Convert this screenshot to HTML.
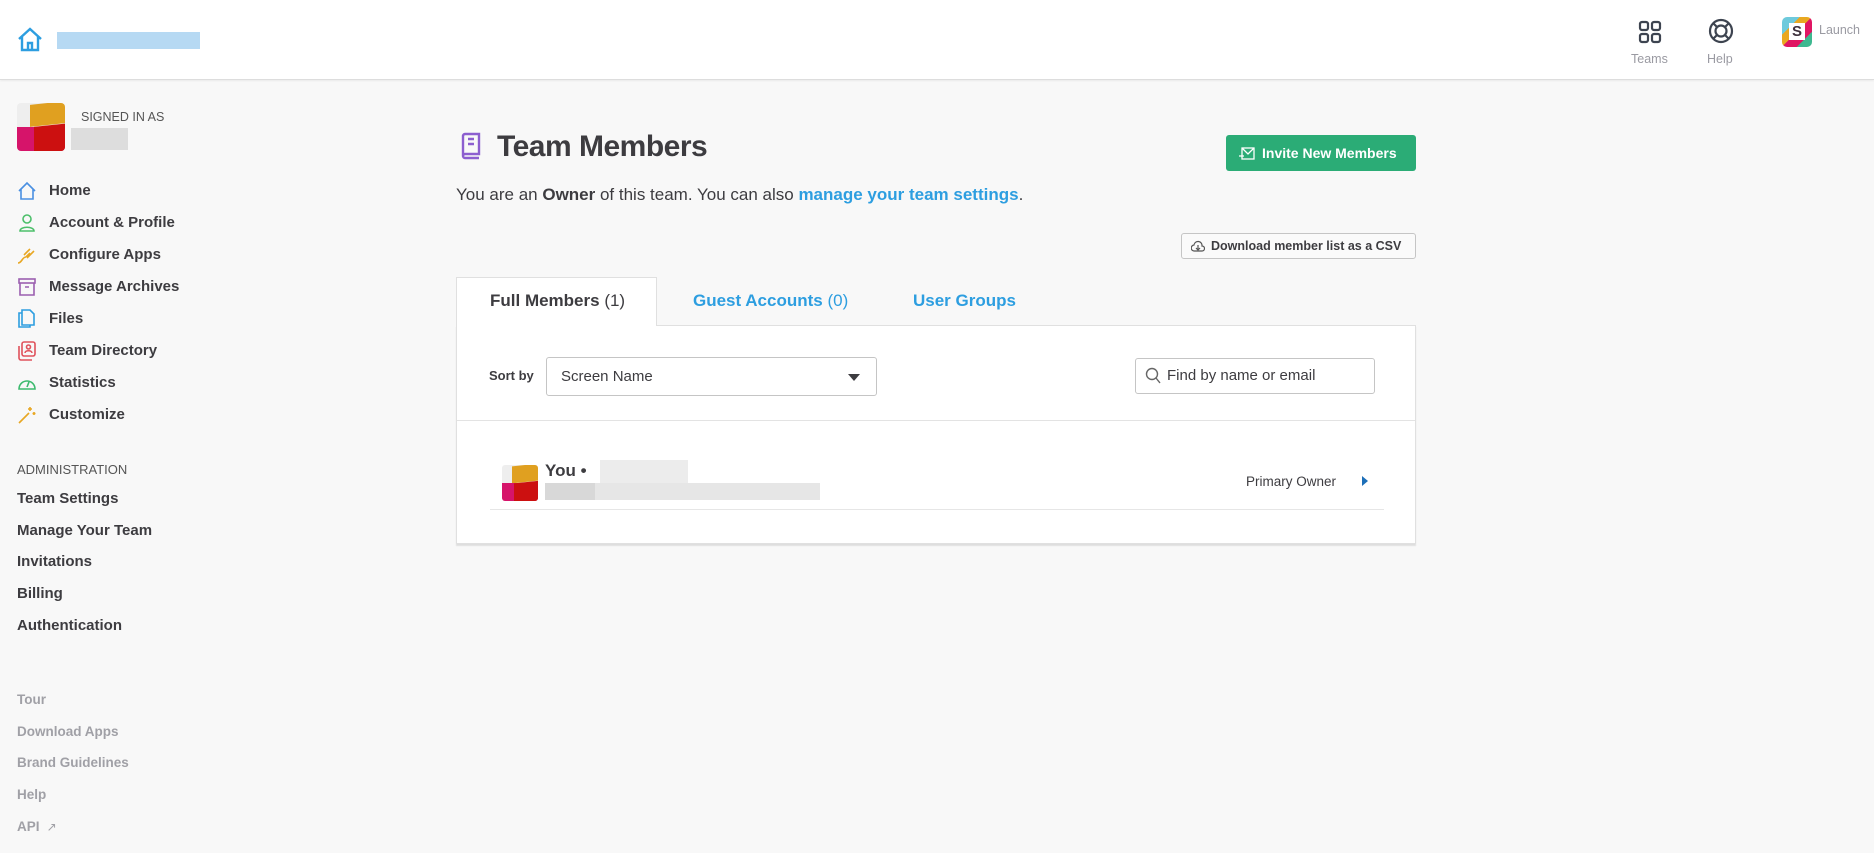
<!DOCTYPE html>
<html><head><meta charset="utf-8"><style>
*{box-sizing:border-box;margin:0;padding:0}
body{width:1874px;height:853px;overflow:hidden;background:#f8f8f8;font-family:"Liberation Sans",sans-serif;color:#2c2d30;position:relative}
.a{position:absolute;white-space:nowrap}
.hdr{position:absolute;left:0;top:0;width:1874px;height:80px;background:#fff;border-bottom:1px solid #ddd;box-shadow:0 1px 2px rgba(0,0,0,.06)}
.nav{font-size:15px;font-weight:700;color:#3d3c40}
.ft{font-size:13.5px;font-weight:700;color:#a0a0a6}
.ic{position:absolute;left:17px}
</style></head><body>
<div class="hdr">
<svg class="a" style="left:17px;top:26px" width="26" height="26" viewBox="0 0 26 26" fill="none" stroke="#2d9ee0" stroke-width="2.4"><path d="M2 13 L13 3 L24 13 M5 11 V24 H21 V11 M11 24 V17 H15 V24"/></svg>
<div class="a" style="left:57px;top:32px;width:143px;height:17px;background:#b6d9f3"></div>
<svg class="a" style="left:1638px;top:20px" width="24" height="24" viewBox="0 0 24 24" fill="none" stroke="#3d4450" stroke-width="2.2"><rect x="2" y="2" width="8" height="8" rx="2"/><rect x="14" y="2" width="8" height="8" rx="2"/><rect x="2" y="14" width="8" height="8" rx="2"/><rect x="14" y="14" width="8" height="8" rx="2"/></svg>
<div class="a" style="left:1631px;top:52px;font-size:12.5px;color:#9a9aa2">Teams</div>
<svg class="a" style="left:1708px;top:18px" width="26" height="26" viewBox="0 0 26 26" fill="none" stroke="#3d4450" stroke-width="2.2"><circle cx="13" cy="13" r="11"/><circle cx="13" cy="13" r="5.5"/><path d="M5 5l4 4M21 5l-4 4M5 21l4-4M21 21l-4-4"/></svg>
<div class="a" style="left:1707px;top:52px;font-size:12.5px;color:#9a9aa2">Help</div>
<div class="a" style="left:1782px;top:17px;width:30px;height:30px;border-radius:5px;overflow:hidden;background:linear-gradient(135deg,#6ecadc 0 30%,#e9a820 30% 50%,#e01563 50% 75%,#3eb890 75%)"><div style="position:absolute;left:7px;top:6px;width:16px;height:17px;background:#fff;color:#3e313c;font-weight:700;font-size:15px;text-align:center;line-height:17px">S</div></div>
<div class="a" style="left:1819px;top:23px;font-size:12.5px;color:#9a9aa2">Launch</div>
</div>

<div class="a" style="left:17px;top:103px;width:48px;height:48px;border-radius:4px;overflow:hidden;background:#eee">
<div style="position:absolute;left:13px;top:0;width:35px;height:22px;background:#e0a020;transform:skewY(-6deg)"></div>
<div style="position:absolute;left:0;top:24px;width:48px;height:30px;background:#d6146a"></div>
<div style="position:absolute;left:17px;top:22px;width:35px;height:30px;background:#cc1010;transform:skewY(-6deg)"></div>
</div>
<div class="a" style="left:81px;top:110px;font-size:12.5px;color:#555">SIGNED IN AS</div>
<div class="a" style="left:71px;top:128px;width:57px;height:22px;background:#ddd"></div>

<svg class="ic" style="top:181px" width="20" height="20" viewBox="0 0 20 20" fill="none" stroke="#4a90e2" stroke-width="1.6"><path d="M2 10L10 2l8 8M4 8v10h12V8"/></svg>
<svg class="ic" style="top:213px" width="20" height="20" viewBox="0 0 20 20" fill="none" stroke="#4cbf6a" stroke-width="1.6"><circle cx="10" cy="6" r="4"/><path d="M3 18c0-5 14-5 14 0z"/></svg>
<svg class="ic" style="top:245px" width="20" height="20" viewBox="0 0 20 20" fill="none" stroke="#e8a723" stroke-width="1.6"><path d="M1 18c4 0 4-6 8-6M9 12l4-4m-6 2l6-6m-3 9l7-7"/></svg>
<svg class="ic" style="top:277px" width="20" height="20" viewBox="0 0 20 20" fill="none" stroke="#9b5fb0" stroke-width="1.6"><rect x="2" y="2" width="16" height="4"/><path d="M3 6v12h14V6M8 10h4"/></svg>
<svg class="ic" style="top:309px" width="20" height="20" viewBox="0 0 20 20" fill="none" stroke="#2d9ee0" stroke-width="1.6"><path d="M5 4H2v14h11v-2"/><path d="M5 1h8l4 4v11H5z"/></svg>
<svg class="ic" style="top:341px" width="20" height="20" viewBox="0 0 20 20" fill="none" stroke="#e0525c" stroke-width="1.6"><rect x="5" y="1" width="13" height="14" rx="2"/><path d="M2 5v12a2 2 0 002 2h11"/><circle cx="11.5" cy="6" r="2"/><path d="M8 12c0-3 7-3 7 0"/></svg>
<svg class="ic" style="top:373px" width="20" height="20" viewBox="0 0 20 20" fill="none" stroke="#3cba6e" stroke-width="1.6"><path d="M2 16a8 8 0 1116 0z"/><path d="M10 14l2-5"/></svg>
<svg class="ic" style="top:405px" width="20" height="20" viewBox="0 0 20 20" fill="none" stroke="#e8a723" stroke-width="1.6"><path d="M2 18l10-10M13 2v4M11 4h4M17 7v3M15.5 8.5h3"/></svg>
<div class="a nav" style="left:49px;top:182px">Home</div>
<div class="a nav" style="left:49px;top:214px">Account &amp; Profile</div>
<div class="a nav" style="left:49px;top:246px">Configure Apps</div>
<div class="a nav" style="left:49px;top:278px">Message Archives</div>
<div class="a nav" style="left:49px;top:310px">Files</div>
<div class="a nav" style="left:49px;top:342px">Team Directory</div>
<div class="a nav" style="left:49px;top:374px">Statistics</div>
<div class="a nav" style="left:49px;top:406px">Customize</div>

<div class="a" style="left:17px;top:462px;font-size:13px;color:#555">ADMINISTRATION</div>
<div class="a nav" style="left:17px;top:490px">Team Settings</div>
<div class="a nav" style="left:17px;top:522px">Manage Your Team</div>
<div class="a nav" style="left:17px;top:553px">Invitations</div>
<div class="a nav" style="left:17px;top:585px">Billing</div>
<div class="a nav" style="left:17px;top:617px">Authentication</div>

<div class="a ft" style="left:17px;top:692px">Tour</div>
<div class="a ft" style="left:17px;top:724px">Download Apps</div>
<div class="a ft" style="left:17px;top:755px">Brand Guidelines</div>
<div class="a ft" style="left:17px;top:787px">Help</div>
<div class="a ft" style="left:17px;top:819px">API <span style="font-weight:400;font-size:12px">&nbsp;↗</span></div>

<svg class="a" style="left:459px;top:132px" width="24" height="28" viewBox="0 0 24 28" fill="none" stroke="#8c5ecf" stroke-width="2.4"><path d="M4 24V4a2 2 0 012-2h14v20H6a2 2 0 000 4h14"/><path d="M9 7h6M9 12h6"/></svg>
<div class="a" style="left:497px;top:130px;font-size:30px;font-weight:700;color:#3d3c40;letter-spacing:-0.5px">Team Members</div>
<div class="a" style="left:1226px;top:135px;width:190px;height:36px;background:#2bac76;border-radius:3px;color:#fff;font-weight:700;font-size:14px;line-height:36px;padding-left:36px">Invite New Members
<svg style="position:absolute;left:13px;top:12px" width="16" height="13" viewBox="0 0 16 13" fill="none" stroke="#fff" stroke-width="1.3"><rect x="3" y="1" width="12" height="11"/><path d="M0 9h5M3 1l6 6 6-6"/></svg></div>
<div class="a" style="left:456px;top:185px;font-size:17px;color:#3d3c40">You are an <b>Owner</b> of this team. You can also <b style="color:#2d9ee0">manage your team settings</b>.</div>
<div class="a" style="left:1181px;top:233px;width:235px;height:26px;border:1px solid #c5c5c5;border-radius:3px;background:#fafafa;font-size:12.5px;font-weight:700;color:#3d3c40;line-height:24px;padding-left:29px">Download member list as a CSV
<svg style="position:absolute;left:9px;top:6px" width="14" height="13" viewBox="0 0 14 13" fill="none" stroke="#555" stroke-width="1.2"><path d="M3.5 11A3 3 0 013 5a4 4 0 018 1 2.5 2.5 0 010 5z"/><path d="M7 5v5M5 8l2 2 2-2"/></svg></div>

<div class="a" style="left:456px;top:277px;width:201px;height:49px;background:#fff;border:1px solid #e0e0e0;border-bottom:none;z-index:2"></div>
<div class="a" style="left:456px;top:325px;width:960px;height:219px;background:#fff;border:1px solid #e0e0e0;box-shadow:0 2px 1px rgba(0,0,0,.1)"></div>
<div class="a" style="left:490px;top:291px;font-size:17px;font-weight:700;color:#3d3c40;z-index:3">Full Members <span style="font-weight:400">(1)</span></div>
<div class="a" style="left:693px;top:291px;font-size:17px;font-weight:700;color:#2d9ee0">Guest Accounts <span style="font-weight:400">(0)</span></div>
<div class="a" style="left:913px;top:291px;font-size:17px;font-weight:700;color:#2d9ee0">User Groups</div>

<div class="a" style="left:489px;top:368px;font-size:13px;font-weight:700;color:#3d3c40">Sort by</div>
<div class="a" style="left:546px;top:357px;width:331px;height:39px;border:1px solid #c5c5c5;border-radius:3px;background:#fff;font-size:15px;color:#3d3c40;line-height:37px;padding-left:14px">Screen Name
<div style="position:absolute;right:16px;top:16px;border-left:6px solid transparent;border-right:6px solid transparent;border-top:7px solid #3d3c40"></div></div>
<div class="a" style="left:1135px;top:358px;width:240px;height:36px;border:1px solid #c5c5c5;border-radius:3px;background:#fff;font-size:15px;color:#3d3c40;line-height:34px;padding-left:31px">Find by name or email
<svg style="position:absolute;left:9px;top:8px" width="16" height="18" viewBox="0 0 16 18" fill="none" stroke="#666" stroke-width="1.4"><circle cx="7" cy="7" r="5.5"/><path d="M11 11l4 5"/></svg></div>
<div class="a" style="left:457px;top:420px;width:958px;height:1px;background:#e3e3e3"></div>

<div class="a" style="left:502px;top:465px;width:36px;height:36px;border-radius:3px;overflow:hidden;background:#eee">
<div style="position:absolute;left:10px;top:0;width:26px;height:17px;background:#e0a020;transform:skewY(-6deg)"></div>
<div style="position:absolute;left:0;top:18px;width:36px;height:20px;background:#d6146a"></div>
<div style="position:absolute;left:12px;top:17px;width:26px;height:22px;background:#cc1010;transform:skewY(-6deg)"></div>
</div>
<div class="a" style="left:545px;top:461px;font-size:17px;font-weight:700;color:#3d3c40">You •</div>
<div class="a" style="left:600px;top:460px;width:88px;height:23px;background:#ececec"></div>
<div class="a" style="left:545px;top:483px;width:275px;height:17px;background:#e6e6e6"></div>
<div class="a" style="left:545px;top:483px;width:50px;height:17px;background:#d8d8d8"></div>
<div class="a" style="left:1246px;top:474px;font-size:13.5px;color:#3d3c40">Primary Owner</div>
<div class="a" style="left:1362px;top:476px;border-top:5px solid transparent;border-bottom:5px solid transparent;border-left:6px solid #1d6fb8"></div>
<div class="a" style="left:490px;top:509px;width:894px;height:1px;background:#e6e6e6"></div>
</body></html>
